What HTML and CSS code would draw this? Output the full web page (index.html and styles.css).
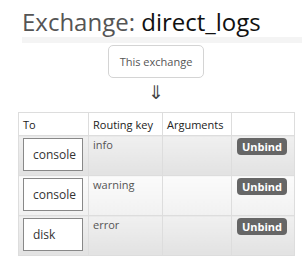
FILE: index.html
```html
<!DOCTYPE html>
<html lang="en">
<head>
    <meta charset="UTF-8">
    <title>Exchange: direct_logs</title>
    <link rel="stylesheet" href="styles.css">
</head>
<body>
    <h1 class="title"><span class="title-label">Exchange:</span> direct_logs</h1>
    <div class="title-bar"></div>

    <div class="flow">
        <div class="exchange-box">This exchange</div>
        <div class="flow-arrow">&#8659;</div>
    </div>

    <table class="bindings">
        <thead>
            <tr>
                <th class="col-to">To</th>
                <th class="col-key">Routing key</th>
                <th class="col-args">Arguments</th>
                <th class="col-action"></th>
            </tr>
        </thead>
        <tbody>
            <tr class="row-alt">
                <td><span class="queue-box">console</span></td>
                <td>info</td>
                <td></td>
                <td><button class="unbind-btn">Unbind</button></td>
            </tr>
            <tr>
                <td><span class="queue-box">console</span></td>
                <td>warning</td>
                <td></td>
                <td><button class="unbind-btn">Unbind</button></td>
            </tr>
            <tr class="row-alt">
                <td><span class="queue-box">disk</span></td>
                <td>error</td>
                <td></td>
                <td><button class="unbind-btn">Unbind</button></td>
            </tr>
        </tbody>
    </table>
</body>
</html>
```

FILE: styles.css
```css
* {
    margin: 0;
    padding: 0;
    box-sizing: border-box;
}

body {
    font-family: 'Open Sans', 'Noto Sans', sans-serif;
    font-size: 11px;
    color: #444;
    background: #fff;
    width: 302px;
    overflow: hidden;
}

.title {
    font-size: 24px;
    font-weight: 400;
    line-height: 32px;
    padding: 6px 0 0 22px;
    color: #111;
}

.title-label {
    color: #555;
}

.title-bar {
    margin: -1px 0 0 22px;
    height: 6px;
    background: #f4f4f4;
}

/* Exchange flow diagram */
.flow {
    padding: 2px 0 0 108px;
}

.exchange-box {
    width: 96px;
    height: 33px;
    line-height: 31px;
    border: 1px solid #d4d4d4;
    border-radius: 5px;
    text-align: center;
    color: #555;
    font-size: 11px;
}

.flow-arrow {
    width: 96px;
    padding-top: 3px;
    text-align: center;
    font-family: 'DejaVu Sans', sans-serif;
    font-size: 19px;
    line-height: 22px;
    color: #444;
}

/* Bindings table */
.bindings {
    margin: 9px 0 0 18px;
    width: 277px;
    table-layout: fixed;
    border-collapse: collapse;
    border: 1px solid #ddd;
}

.bindings th {
    text-align: left;
    font-weight: 400;
    color: #222;
    height: 23px;
    padding: 0 4px;
    white-space: nowrap;
    border: 1px solid #ddd;
    background: #fff;
}

.col-to { width: 70px; }
.col-key { width: 74px; }
.col-args { width: 69px; }

.bindings td {
    height: 40px;
    vertical-align: top;
    padding: 1px 4px;
    border: 1px solid #ddd;
    color: #555;
    white-space: nowrap;
    background: linear-gradient(#fbfbfb, #f1f1f1);
}

.bindings .row-alt td {
    background: linear-gradient(#f0f0f0, #e2e2e2);
}

.bindings td:first-child {
    padding: 2px 4px;
}

.bindings td:last-child {
    padding: 2px 5px;
}

.queue-box {
    display: block;
    width: 60px;
    height: 33px;
    line-height: 31px;
    padding-left: 9px;
    border: 1px solid #888;
    background: #fff;
    color: #333;
    font-size: 12px;
}

.unbind-btn {
    font-family: inherit;
    font-size: 11px;
    font-weight: 700;
    color: #fff;
    background: #666;
    border: none;
    border-radius: 4px;
    padding: 0 5px;
    height: 17px;
    line-height: 17px;
}
```
